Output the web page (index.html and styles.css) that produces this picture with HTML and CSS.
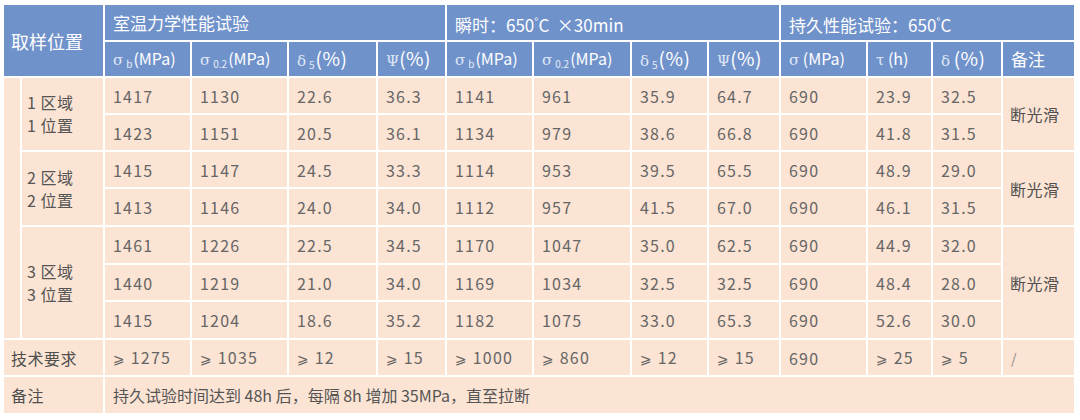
FILE: index.html
```html
<!DOCTYPE html>
<html lang="zh">
<head>
<meta charset="utf-8">
<title>试验数据表</title>
<link rel="stylesheet" href="styles.css">
</head>
<body>
<table class="data">
  <colgroup>
    <col class="c-strip"><col class="c-label">
    <col class="c1"><col class="c2"><col class="c3"><col class="c4">
    <col class="c5"><col class="c6"><col class="c7"><col class="c8">
    <col class="c9"><col class="c10"><col class="c11"><col class="c12">
  </colgroup>
  <thead>
    <tr class="h1">
      <th rowspan="2" colspan="2" class="big">取样位置</th>
      <th colspan="4">室温力学性能试验</th>
      <th colspan="4">瞬时：650<span class="deg">°</span>C &nbsp;×30min</th>
      <th colspan="4">持久性能试验：650<span class="deg">°</span>C</th>
    </tr>
    <tr class="h2">
      <th><span class="g">σ</span><sub>b</sub>(MPa)</th>
      <th><span class="g">σ</span><sub>0.2</sub>(MPa)</th>
      <th><span class="g">δ</span><sub>5</sub><span class="pc">(%)</span></th>
      <th><span class="g">Ψ</span><span class="pc">(%)</span></th>
      <th><span class="g">σ</span><sub>b</sub>(MPa)</th>
      <th><span class="g">σ</span><sub>0.2</sub>(MPa)</th>
      <th><span class="g">δ</span><sub>5</sub><span class="pc">(%)</span></th>
      <th><span class="g">Ψ</span><span class="pc">(%)</span></th>
      <th><span class="g">σ</span> (MPa)</th>
      <th><span class="g">τ</span> (h)</th>
      <th><span class="g">δ</span> <span class="pc">(%)</span></th>
      <th class="cjk">备注</th>
    </tr>
  </thead>
  <tbody>
    <tr class="r37">
      <td rowspan="7" class="strip"></td>
      <td rowspan="2" class="grp">1 区域<br>1 位置</td>
      <td>1417</td><td>1130</td><td>22.6</td><td>36.3</td>
      <td>1141</td><td>961</td><td>35.9</td><td>64.7</td>
      <td>690</td><td>23.9</td><td>32.5</td>
      <td rowspan="2" class="note">断光滑</td>
    </tr>
    <tr class="r37">
      <td>1423</td><td>1151</td><td>20.5</td><td>36.1</td>
      <td>1134</td><td>979</td><td>38.6</td><td>66.8</td>
      <td>690</td><td>41.8</td><td>31.5</td>
    </tr>
    <tr class="r37">
      <td rowspan="2" class="grp">2 区域<br>2 位置</td>
      <td>1415</td><td>1147</td><td>24.5</td><td>33.3</td>
      <td>1114</td><td>953</td><td>39.5</td><td>65.5</td>
      <td>690</td><td>48.9</td><td>29.0</td>
      <td rowspan="2" class="note">断光滑</td>
    </tr>
    <tr class="r38">
      <td>1413</td><td>1146</td><td>24.0</td><td>34.0</td>
      <td>1112</td><td>957</td><td>41.5</td><td>67.0</td>
      <td>690</td><td>46.1</td><td>31.5</td>
    </tr>
    <tr class="r38">
      <td rowspan="3" class="grp">3 区域<br>3 位置</td>
      <td>1461</td><td>1226</td><td>22.5</td><td>34.5</td>
      <td>1170</td><td>1047</td><td>35.0</td><td>62.5</td>
      <td>690</td><td>44.9</td><td>32.0</td>
      <td rowspan="3" class="note">断光滑</td>
    </tr>
    <tr class="r37">
      <td>1440</td><td>1219</td><td>21.0</td><td>34.0</td>
      <td>1169</td><td>1034</td><td>32.5</td><td>32.5</td>
      <td>690</td><td>48.4</td><td>28.0</td>
    </tr>
    <tr class="r38">
      <td>1415</td><td>1204</td><td>18.6</td><td>35.2</td>
      <td>1182</td><td>1075</td><td>33.0</td><td>65.3</td>
      <td>690</td><td>52.6</td><td>30.0</td>
    </tr>
    <tr class="r37">
      <td colspan="2" class="label">技术要求</td>
      <td><span class="ge">⩾</span> 1275</td><td><span class="ge">⩾</span> 1035</td><td><span class="ge">⩾</span> 12</td><td><span class="ge">⩾</span> 15</td>
      <td><span class="ge">⩾</span> 1000</td><td><span class="ge">⩾</span> 860</td><td><span class="ge">⩾</span> 12</td><td><span class="ge">⩾</span> 15</td>
      <td>690</td><td><span class="ge">⩾</span> 25</td><td><span class="ge">⩾</span> 5</td>
      <td class="slash">/</td>
    </tr>
    <tr class="r38">
      <td colspan="2" class="label">备注</td>
      <td colspan="12" class="remark">持久试验时间达到 48h 后，每隔 8h 增加 35MPa，直至拉断</td>
    </tr>
  </tbody>
</table>
</body>
</html>
```

FILE: styles.css
```css
html, body {
  margin: 0;
  padding: 0;
  background: #ffffff;
}

.data {
  margin: 3px 0 0 2px;
  border-collapse: collapse;
  table-layout: fixed;
  width: 1074px;
  font-family: "Noto Sans CJK SC", "Noto Sans", sans-serif;
}

.c-strip { width: 18px; }
.c-label { width: 83px; }
.c1 { width: 87px; }
.c2 { width: 97px; }
.c3 { width: 89px; }
.c4 { width: 69px; }
.c5 { width: 87px; }
.c6 { width: 98px; }
.c7 { width: 77px; }
.c8 { width: 72px; }
.c9 { width: 87px; }
.c10 { width: 65px; }
.c11 { width: 70px; }
.c12 { width: 73px; }

.data th,
.data td {
  border: 2px solid #ffffff;
  padding: 0 0 0 8px;
  text-align: left;
  vertical-align: middle;
  white-space: nowrap;
  overflow: hidden;
}

.data th {
  background: #7092cb;
  color: #ffffff;
  font-weight: normal;
  font-size: 16px;
  line-height: 22px;
}

.h1 { height: 37px; }
.h2 { height: 36px; }

.h1 th {
  font-size: 17px;
  padding-top: 1px;
}

.data th.big {
  font-size: 18px;
  padding-left: 7px;
}

.data th.cjk {
  font-size: 17px;
}

.deg {
  font-size: 11px;
  vertical-align: 6px;
}

.g {
  font-family: "DejaVu Serif", "Liberation Serif", serif;
  color: #dfe7f5;
  font-size: 15px;
}

.pc {
  font-size: 19px;
  letter-spacing: 0.5px;
}

.data sub {
  font-size: 10px;
  vertical-align: -3px;
  line-height: 0;
  margin: 0 1px 0 3px;
  color: #e7edf8;
}

.data td {
  background: #fce4d4;
  color: #666666;
  font-size: 16px;
  line-height: 20px;
  letter-spacing: 1.2px;
}

.r37 { height: 37px; }
.r38 { height: 38px; }

.data td.strip {
  padding: 0;
}

.data td.grp {
  padding-left: 5px;
  font-size: 16px;
  line-height: 23px;
  color: #555555;
  letter-spacing: 0.5px;
}

.data td.note {
  padding-left: 7px;
  font-size: 16px;
  color: #4f4f4f;
  letter-spacing: 0.5px;
}

.data td.label {
  padding-left: 7px;
  font-size: 16px;
  color: #4f4f4f;
  letter-spacing: 0.5px;
}

.data td.remark {
  color: #555555;
  letter-spacing: 0;
}

.ge {
  font-family: "DejaVu Sans", sans-serif;
  font-size: 14px;
}

.data td.slash {
  color: #8a8a8a;
  font-size: 14px;
}
```
